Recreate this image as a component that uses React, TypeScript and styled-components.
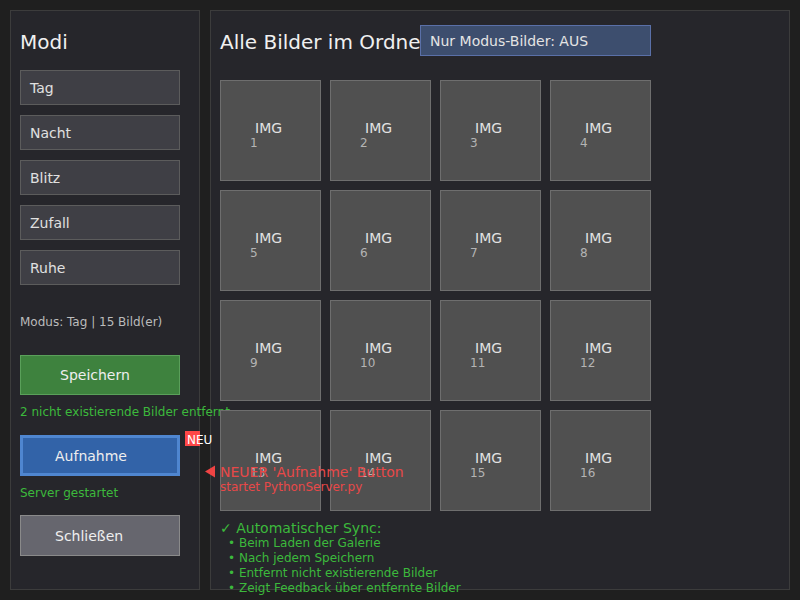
import React from "react";
import styled, { createGlobalStyle } from "styled-components";

const Global = createGlobalStyle`
  html, body { margin: 0; padding: 0; background: #1f1f1f; }
  body { font-family: "DejaVu Sans", "Liberation Sans", sans-serif; }
  * { box-sizing: border-box; }
`;

const Page = styled.div`
  position: relative;
  width: 800px;
  height: 600px;
  padding: 10px;
  display: flex;
  gap: 10px;
  background: #1f1f1f;
  overflow: hidden;
`;

const Panel = styled.div<{ $w: number; $raised?: boolean }>`
  position: ${(p) => (p.$raised ? "relative" : "static")};
  width: ${(p) => p.$w}px;
  height: 580px;
  background: #26262b;
  border: 1px solid #3c3c3c;
  padding: 19px 9px 0 9px;
  display: flex;
  flex-direction: column;
  align-items: flex-start;
`;

const Title = styled.div`
  font-size: 20px;
  line-height: 24px;
  color: #f0f0f0;
  white-space: nowrap;
`;

const ModeList = styled.div`
  margin-top: 16px;
  display: flex;
  flex-direction: column;
  gap: 10px;
`;

const ModeButton = styled.div`
  width: 160px;
  height: 35px;
  background: #3f3f45;
  border: 1px solid #5c5c5c;
  color: #e0e0e0;
  font-size: 14px;
  display: flex;
  align-items: center;
  padding-left: 9px;
`;

const Status = styled.div<{ $mt: number; $color: string }>`
  margin-top: ${(p) => p.$mt}px;
  font-size: 12px;
  line-height: 15px;
  color: ${(p) => p.$color};
  white-space: nowrap;
`;

const ActionButton = styled.div<{
  $mt: number;
  $bg: string;
  $bd: string;
  $bw: number;
  $indent: number;
  $h: number;
}>`
  position: relative;
  margin-top: ${(p) => p.$mt}px;
  width: 160px;
  height: ${(p) => p.$h}px;
  background: ${(p) => p.$bg};
  border: ${(p) => p.$bw}px solid ${(p) => p.$bd};
  color: #eeeeee;
  font-size: 14px;
  display: flex;
  align-items: center;
  padding-left: ${(p) => p.$indent - p.$bw}px;
`;

const Badge = styled.span`
  position: absolute;
  left: 162px;
  top: -7px;
  width: 15px;
  height: 15px;
  background: #ff4747;
  color: #ffffff;
  font-size: 12px;
  line-height: 19px;
  padding-left: 2px;
  white-space: nowrap;
  z-index: 3;
`;

const Annotation = styled.div`
  position: absolute;
  left: 182px;
  top: 26px;
  display: flex;
  align-items: flex-start;
  gap: 4px;
  z-index: 3;
  pointer-events: none;
`;

const Arrow = styled.svg`
  margin-top: 1px;
  flex: none;
`;

const AnnoText = styled.div`
  color: #e84848;
  white-space: nowrap;
`;

const AnnoLine = styled.div<{ $size: number; $lh: number }>`
  font-size: ${(p) => p.$size}px;
  line-height: ${(p) => p.$lh}px;
`;

const Toggle = styled.div`
  position: absolute;
  left: 420px;
  top: 25px;
  width: 231px;
  height: 31px;
  background: #3d4e6e;
  border: 1px solid #5a70a8;
  color: #e4e4e4;
  font-size: 14px;
  display: flex;
  align-items: center;
  padding-left: 9px;
  white-space: nowrap;
`;

const Grid = styled.div`
  margin-top: 26px;
  display: grid;
  grid-template-columns: repeat(4, 101px);
  grid-auto-rows: 101px;
  gap: 9px;
`;

const Tile = styled.div`
  position: relative;
  background: #505050;
  border: 1px solid #6e6e6e;
  padding: 39px 0 0 29px;
  display: flex;
  flex-direction: column;
`;

const TileLabel = styled.div`
  font-size: 14px;
  line-height: 16px;
  color: #e2e2e2;
  margin-left: 5px;
`;

const TileNum = styled.div`
  font-size: 12px;
  line-height: 14px;
  color: #b4b4b4;
`;

const Sync = styled.div`
  margin-top: 9px;
  color: #3cb93c;
  white-space: nowrap;
`;

const SyncHead = styled.div`
  font-size: 14px;
  line-height: 16px;
`;

const SyncItem = styled.div`
  font-size: 12px;
  line-height: 15px;
  padding-left: 8px;
`;

const modes = ["Tag", "Nacht", "Blitz", "Zufall", "Ruhe"];
const syncItems = [
  "Beim Laden der Galerie",
  "Nach jedem Speichern",
  "Entfernt nicht existierende Bilder",
  "Zeigt Feedback über entfernte Bilder",
];

export default function App() {
  return (
    <>
      <Global />
      <Page>
        <Panel $w={190} $raised>
          <Title>Modi</Title>
          <ModeList>
            {modes.map((m) => (
              <ModeButton key={m}>{m}</ModeButton>
            ))}
          </ModeList>
          <Status $mt={30} $color="#bbbbbb">
            Modus: Tag | 15 Bild(er)
          </Status>
          <ActionButton $mt={25} $h={40} $bg="#3e823e" $bd="#5aa05a" $bw={1} $indent={40}>
            Speichern
          </ActionButton>
          <Status $mt={10} $color="#3cb93c">
            2 nicht existierende Bilder entfernt
          </Status>
          <ActionButton $mt={15} $h={41} $bg="#3263a8" $bd="#4f86d0" $bw={3} $indent={35}>
            Aufnahme
            <Badge>NEU</Badge>
            <Annotation>
              <Arrow width="11" height="14" viewBox="0 0 11 14">
                <polygon points="0,6.5 10,0.5 10,12.5" fill="#f04444" />
              </Arrow>
              <AnnoText>
                <AnnoLine $size={14} $lh={16}>NEUER 'Aufnahme' Button</AnnoLine>
                <AnnoLine $size={12} $lh={14}>startet PythonServer.py</AnnoLine>
              </AnnoText>
            </Annotation>
          </ActionButton>
          <Status $mt={10} $color="#3cb93c">
            Server gestartet
          </Status>
          <ActionButton $mt={14} $h={41} $bg="#66666e" $bd="#8a8a8a" $bw={1} $indent={35}>
            Schließen
          </ActionButton>
        </Panel>
        <Panel $w={580}>
          <Title>Alle Bilder im Ordner</Title>
          <Grid>
            {Array.from({ length: 16 }, (_, i) => (
              <Tile key={i}>
                <TileLabel>IMG</TileLabel>
                <TileNum>{i + 1}</TileNum>
              </Tile>
            ))}
          </Grid>
          <Sync>
            <SyncHead>✓ Automatischer Sync:</SyncHead>
            {syncItems.map((s) => (
              <SyncItem key={s}>• {s}</SyncItem>
            ))}
          </Sync>
        </Panel>
        <Toggle>Nur Modus-Bilder: AUS</Toggle>
      </Page>
    </>
  );
}
